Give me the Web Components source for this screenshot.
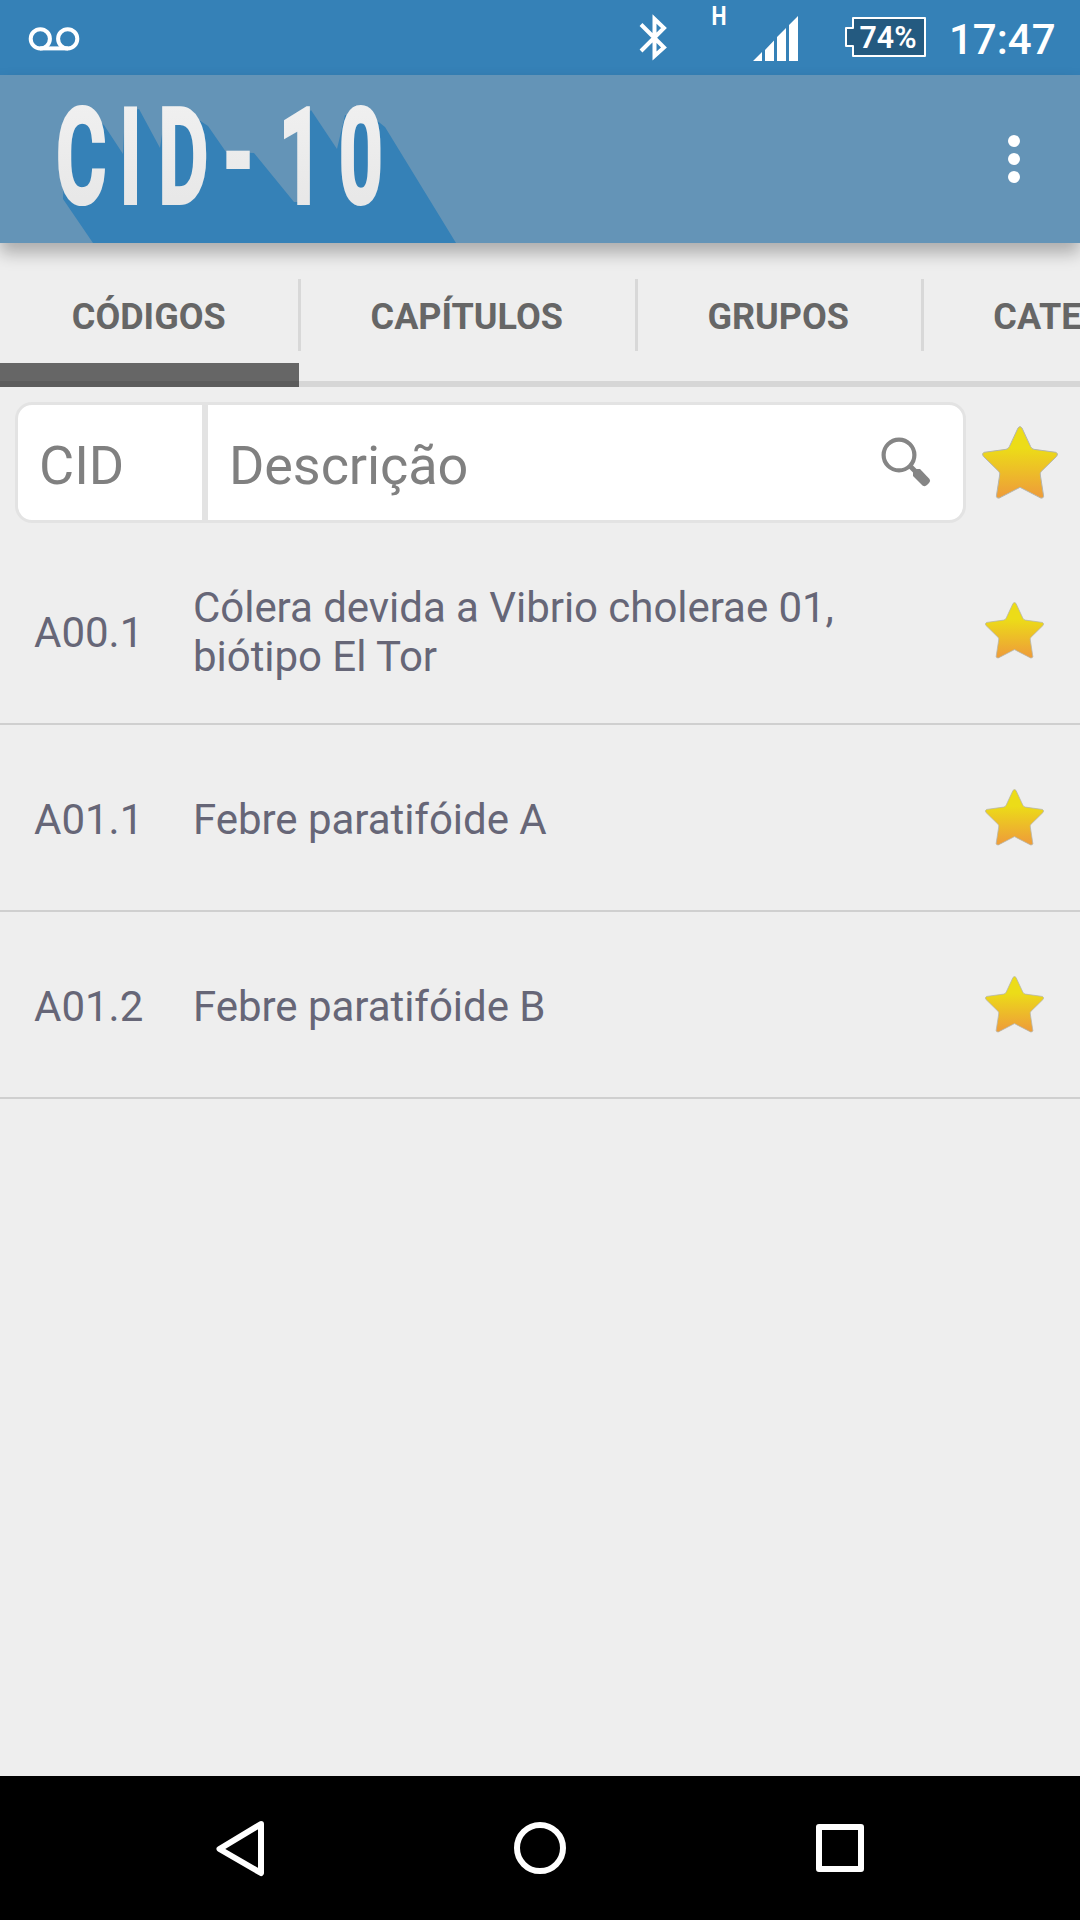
<!DOCTYPE html>
<html lang="pt-BR">
<head>
<meta charset="utf-8">
<title>CID-10</title>
<style>
  body {
    margin: 0;
    background: #eeeeee;
    font-family: Roboto, "Noto Sans", sans-serif;
  }
</style>
</head>
<body>
<cid-app></cid-app>

<script>
// Shared base: clones the element's markup into an open shadow root
class CidElement extends HTMLElement {
  constructor() {
    super();
    const template = document.createElement('template');
    template.innerHTML = this.constructor.markup;
    this.attachShadow({ mode: 'open' });
    this.shadowRoot.appendChild(template.content.cloneNode(true));
  }
}

// <cid-status-bar> : notification icons on the left, system icons on the right
class CidStatusBar extends CidElement {
  static markup = `
<style>
  :host {
    display: flex;
    justify-content: space-between;
    height: 75px;
    background: #3581b7;
    color: #ffffff;
    font-weight: 500;
  }

  svg {
    display: block;
  }

  .system {
    display: flex;
  }

  .clock {
    width: 131px;
    font-size: 42px;
    line-height: 79px;
    white-space: nowrap;
  }
</style>

<svg width="100" height="75" viewBox="0 0 100 75" fill="none" stroke="#fff" stroke-width="4">
  <circle cx="40.3" cy="38.8" r="9.6"/>
  <circle cx="67.7" cy="38.8" r="9.6"/>
  <path d="M40 48.4H68"/>
</svg>
<div class="system">
  <svg width="349" height="75" viewBox="600 0 349 75" fill="#fff">
    <!-- Bluetooth -->
    <path d="M641 24.5L664 47.5L654.5 56V19L664 28L641 51" fill="none" stroke="#fff" stroke-width="4"/>
    <text transform="translate(711.5 25) scale(.85 1)" font-size="25" font-weight="700">H</text>
    <!-- Signal -->
    <path d="M753 61L762 52V61zM765 61V50L774 40.5V61zM777 61V37L786 28V61zM789 61V25L798 16V61z"/>
    <!-- Battery -->
    <path d="M853 18H925V56H853V46H846V28H853z" fill="#245a80" stroke="#fff" stroke-width="2" stroke-linejoin="round"/>
    <text x="859.5" y="48" font-size="30.5" font-weight="600" textLength="57" lengthAdjust="spacingAndGlyphs">74%</text>
  </svg>
  <span class="clock">17:47</span>
</div>`;
}

// <cid-toolbar> : long-shadow logo and overflow menu
class CidToolbar extends CidElement {
  static markup = `
<style>
  :host {
    display: flex;
    justify-content: space-between;
    position: relative;
    z-index: 1;
    height: 168px;
    background: #6494b7;
    box-shadow: 0 10px 16px rgba(0, 0, 0, 0.28);
  }

  .logo {
    display: block;
    font-weight: 500;
  }

  .logo text {
    vector-effect: non-scaling-stroke;
  }

  button {
    display: flex;
    flex-direction: column;
    align-items: center;
    justify-content: center;
    gap: 6px;
    width: 132px;
    padding: 0;
    border: 0;
    background: none;
  }

  i {
    width: 12px;
    height: 12px;
    border-radius: 50%;
    background: #ffffff;
  }
</style>

<svg class="logo" width="480" height="168" viewBox="0 75 480 168">
  <defs>
    <linearGradient id="ink" x1="0" y1="0" x2="0" y2="1">
      <stop offset="0" stop-color="#f2f2f2"/>
      <stop offset="1" stop-color="#e5e5e5"/>
    </linearGradient>
  </defs>
  <path fill="#3581b7" d="M63 199L93 243H456L385 127L370 115H345L337 149L311 110L300 125V202H294L254 153L226 152L208 126L190 114H165L160 148L139 109L125 112L123 154L104 125L90 115L70 120L65 130z"/>
  <text transform="translate(0 202) scale(.59 1)" x="95.3 203 268.6 382 473.7 574.8" dy="0 0 0 -3 3 0" font-size="129" fill="url(#ink)" stroke="url(#ink)" stroke-width="5" stroke-linejoin="miter">CID-10</text>
</svg>
<button type="button" aria-label="Menu"><i></i><i></i><i></i></button>`;
}

class CidTabs extends CidElement {
  static markup = `
<style>
  :host {
    display: flex;
    height: 144px;
    box-sizing: border-box;
    overflow: hidden;
    background: linear-gradient(#d6d6d6, #d6d6d6) 0 100% / 100% 6px no-repeat;
  }
</style>
<slot></slot>`;
}

class CidTab extends CidElement {
  static markup = `
<style>
  :host {
    display: flex;
    flex: none;
    flex-direction: column;
    width: var(--tab-width);
    color: #666666;
    font-size: 36px;
    font-weight: 700;
    white-space: nowrap;
  }

  .label {
    display: flex;
    align-items: center;
    justify-content: center;
    height: 72px;
    margin-top: 36px;
    border-right: 3px solid #d8d8d8;
    padding-top: 3px;
    box-sizing: border-box;
    margin-right: -1.5px;
  }

  .bar {
    height: 24px;
    margin-top: auto;
  }

  :host([selected]) .bar {
    background: linear-gradient(#666666 75%, #5c5c5c 75%);
  }
</style>
<span class="label"><slot></slot></span>
<span class="bar"></span>`;
}

// <cid-star> : favourite marker, sized by --star-width
class CidStar extends CidElement {
  static markup = `
<style>
  :host {
    display: block;
    flex: none;
    width: var(--star-width, 59px);
  }

  svg {
    display: block;
    width: 100%;
  }
</style>
<svg viewBox="0 0 228 218">
  <defs>
    <linearGradient id="gold" x1="0" y1="0" x2="0" y2="1">
      <stop offset="0.3" stop-color="#ecdc18"/>
      <stop offset="0.95" stop-color="#ee9f38"/>
    </linearGradient>
  </defs>
  <path d="M108 6Q114 -3 120 6L146 62Q149 69 156 70L222 79Q230 83 224 91L177 137Q174 141 175 147L185 211Q184 218 176 216L114 184L52 216Q44 218 43 211L53 147Q54 141 51 137L4 91Q-2 83 6 79L72 70Q79 69 82 62z" fill="url(#gold)" stroke="#b5b5ad" stroke-width="3"/>
</svg>`;
}

// <cid-search> : code and description fields
class CidSearch extends CidElement {
  static markup = `
<style>
  :host {
    display: flex;
    align-items: center;
    height: 151px;
    box-sizing: border-box;
    padding: 0 22px 0 15px;
    --star-width: 76px;
  }

  .box {
    display: flex;
    width: 951px;
    height: 121px;
    margin: 0 16px 1px 0;
    box-sizing: border-box;
    overflow: hidden;
    border: 3px solid #e3e3e3;
    border-radius: 17px;
    background: #ffffff;
    color: #808080;
    font-size: 54px;
    line-height: 121px;
  }

  .code {
    padding-left: 21px;
    box-sizing: border-box;
    border-right: 6px solid #e3e3e3;
    flex: 0 0 190px;
  }

  .text {
    flex: 1;
    padding-left: 21px;
    letter-spacing: -0.1px;
  }

  svg {
    margin: 29px 29px 0 0;
  }
</style>
<div class="box">
  <span class="code">CID</span>
  <span class="text">Descrição</span>
  <svg width="56" height="56" viewBox="878 434 56 56">
    <circle cx="899" cy="455" r="15.4" fill="none" stroke="#858585" stroke-width="4.2"/>
    <path d="M910 466L917 473" stroke="#858585" stroke-width="5"/>
    <path d="M913 471Q913 469 916 469H920L929.5 479Q931 481 929 483L927 485Q925 487 922.500 485.500L913 476z" fill="#858585"/>
  </svg>
</div>
<cid-star></cid-star>`;
}

// <cid-row code="A00.0"> : one entry of the list
class CidRow extends CidElement {
  static markup = `
<style>
  :host {
    display: flex;
    align-items: center;
    height: 187px;
    box-sizing: border-box;
    padding: 0 36px 0 34px;
    border-bottom: 2px solid #cfcfcf;
    color: #666677;
    font-size: 42px;
    line-height: 49px;
  }

  .code {
    flex: 0 0 159px;
    padding-top: 3px;
  }

  .name {
    width: 680px;
    padding-top: 3px;
    margin-right: auto;
    letter-spacing: -0.04px;
  }
</style>
<span class="code"></span>
<span class="name"><slot></slot></span>
<cid-star></cid-star>`;

  connectedCallback() {
    this.shadowRoot.querySelector('.code').textContent = this.getAttribute('code');
  }
}

// <cid-nav-bar> : back, home, recents
class CidNavBar extends CidElement {
  static markup = `
<style>
  :host {
    display: flex;
    justify-content: center;
    height: 144px;
    background: #000000;
  }

  svg {
    display: block;
    width: 300px;
    height: 144px;
    fill: none;
    stroke: #ffffff;
    stroke-width: 6;
    stroke-linejoin: round;
  }
</style>
<svg viewBox="0 0 300 144"><path d="M171 48L129.500 73L171 97z"/></svg>
<svg viewBox="0 0 300 144"><circle cx="150" cy="72" r="23"/></svg>
<svg viewBox="0 0 300 144"><rect x="129" y="51" width="42" height="42"/></svg>`;
}

class CidApp extends CidElement {
  static markup = `
<style>
  :host {
    display: flex;
    flex-direction: column;
    width: 1080px;
    height: 1920px;
    overflow: hidden;
    background: #eeeeee;
  }

  main {
    flex: 1;
  }
</style>
<cid-status-bar></cid-status-bar>
<cid-toolbar></cid-toolbar>
<cid-tabs>
  <cid-tab selected style="--tab-width: 299px">CÓDIGOS</cid-tab>
  <cid-tab style="--tab-width: 337px">CAPÍTULOS</cid-tab>
  <cid-tab style="--tab-width: 286px">GRUPOS</cid-tab>
  <cid-tab style="--tab-width: 362px">CATEGORIAS</cid-tab>
</cid-tabs>
<cid-search></cid-search>
<main>
  <cid-row code="A00.1">Cólera devida a Vibrio cholerae 01, biótipo El Tor</cid-row>
  <cid-row code="A01.1">Febre paratifóide A</cid-row>
  <cid-row code="A01.2">Febre paratifóide B</cid-row>
</main>
<cid-nav-bar></cid-nav-bar>`;
}

customElements.define('cid-star', CidStar);
customElements.define('cid-status-bar', CidStatusBar);
customElements.define('cid-toolbar', CidToolbar);
customElements.define('cid-tab', CidTab);
customElements.define('cid-tabs', CidTabs);
customElements.define('cid-search', CidSearch);
customElements.define('cid-row', CidRow);
customElements.define('cid-nav-bar', CidNavBar);
customElements.define('cid-app', CidApp);
</script>
</body>
</html>
